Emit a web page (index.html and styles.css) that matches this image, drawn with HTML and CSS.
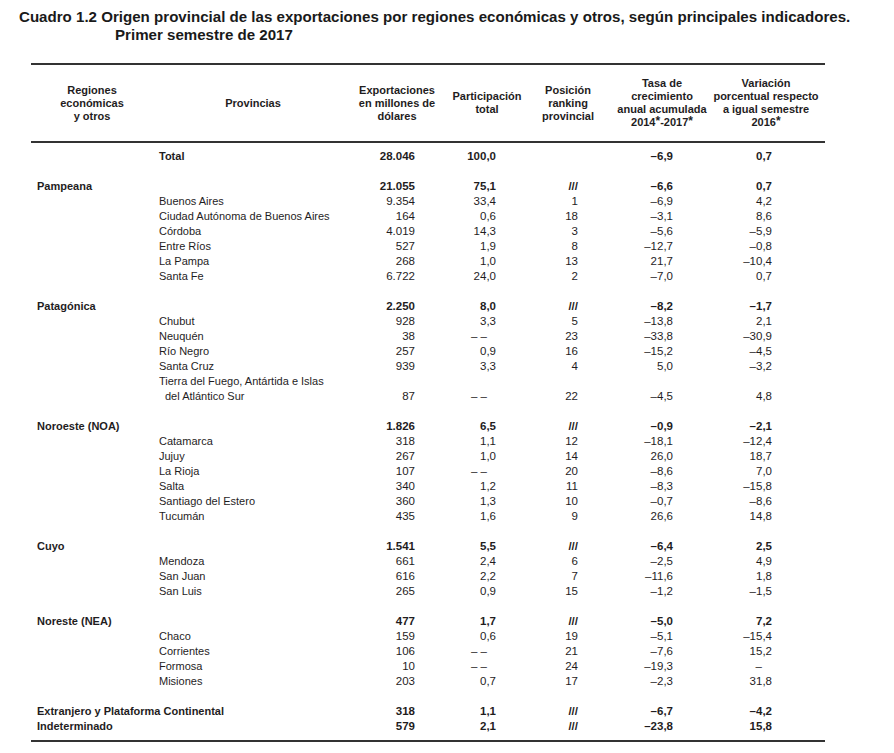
FILE: index.html
```html
<!DOCTYPE html>
<html lang="es">
<head>
<meta charset="utf-8">
<title>Cuadro 1.2</title>
<link rel="stylesheet" href="styles.css">
</head>
<body>
<div class="page">
  <h1 class="title">Cuadro 1.2 Origen provincial de las exportaciones por regiones económicas y otros, según principales indicadores.<br><span class="title-l2">Primer semestre de 2017</span></h1>
  <table class="tbl">
    <colgroup>
      <col class="c-reg"><col class="c-prov"><col class="c-exp"><col class="c-part"><col class="c-pos"><col class="c-tasa"><col class="c-var">
    </colgroup>
    <thead>
      <tr>
        <th>Regiones<br>económicas<br>y otros</th>
        <th>Provincias</th>
        <th>Exportaciones<br>en millones de<br>dólares</th>
        <th>Participación<br>total</th>
        <th>Posición<br>ranking<br>provincial</th>
        <th>Tasa de<br>crecimiento<br>anual acumulada<br>2014<span class="ast">*</span>-2017<span class="ast">*</span></th>
        <th><div class="hv">Variación<br>porcentual respecto<br>a igual semestre<br>2016<span class="ast">*</span></div></th>
      </tr>
    </thead>
    <tbody>
      <tr class="b first"><td></td><td class="prov">Total</td><td class="exp">28.046</td><td class="part">100,0</td><td class="pos"></td><td class="tasa">–6,9</td><td class="var">0,7</td></tr>
      <tr class="sp"><td colspan="7"></td></tr>
      <tr class="b"><td class="reg">Pampeana</td><td></td><td class="exp">21.055</td><td class="part">75,1</td><td class="pos">///</td><td class="tasa">–6,6</td><td class="var">0,7</td></tr>
      <tr><td></td><td class="prov">Buenos Aires</td><td class="exp">9.354</td><td class="part">33,4</td><td class="pos">1</td><td class="tasa">–6,9</td><td class="var">4,2</td></tr>
      <tr><td></td><td class="prov">Ciudad Autónoma de Buenos Aires</td><td class="exp">164</td><td class="part">0,6</td><td class="pos">18</td><td class="tasa">–3,1</td><td class="var">8,6</td></tr>
      <tr><td></td><td class="prov">Córdoba</td><td class="exp">4.019</td><td class="part">14,3</td><td class="pos">3</td><td class="tasa">–5,6</td><td class="var">–5,9</td></tr>
      <tr><td></td><td class="prov">Entre Ríos</td><td class="exp">527</td><td class="part">1,9</td><td class="pos">8</td><td class="tasa">–12,7</td><td class="var">–0,8</td></tr>
      <tr><td></td><td class="prov">La Pampa</td><td class="exp">268</td><td class="part">1,0</td><td class="pos">13</td><td class="tasa">21,7</td><td class="var">–10,4</td></tr>
      <tr><td></td><td class="prov">Santa Fe</td><td class="exp">6.722</td><td class="part">24,0</td><td class="pos">2</td><td class="tasa">–7,0</td><td class="var">0,7</td></tr>
      <tr class="sp"><td colspan="7"></td></tr>
      <tr class="b"><td class="reg">Patagónica</td><td></td><td class="exp">2.250</td><td class="part">8,0</td><td class="pos">///</td><td class="tasa">–8,2</td><td class="var">–1,7</td></tr>
      <tr><td></td><td class="prov">Chubut</td><td class="exp">928</td><td class="part">3,3</td><td class="pos">5</td><td class="tasa">–13,8</td><td class="var">2,1</td></tr>
      <tr><td></td><td class="prov">Neuquén</td><td class="exp">38</td><td class="part nd">– –</td><td class="pos">23</td><td class="tasa">–33,8</td><td class="var">–30,9</td></tr>
      <tr><td></td><td class="prov">Río Negro</td><td class="exp">257</td><td class="part">0,9</td><td class="pos">16</td><td class="tasa">–15,2</td><td class="var">–4,5</td></tr>
      <tr><td></td><td class="prov">Santa Cruz</td><td class="exp">939</td><td class="part">3,3</td><td class="pos">4</td><td class="tasa">5,0</td><td class="var">–3,2</td></tr>
      <tr><td></td><td class="prov">Tierra del Fuego, Antártida e Islas</td><td class="exp"></td><td class="part"></td><td class="pos"></td><td class="tasa"></td><td class="var"></td></tr>
      <tr><td></td><td class="prov cont">del Atlántico Sur</td><td class="exp">87</td><td class="part nd">– –</td><td class="pos">22</td><td class="tasa">–4,5</td><td class="var">4,8</td></tr>
      <tr class="sp"><td colspan="7"></td></tr>
      <tr class="b"><td class="reg">Noroeste (NOA)</td><td></td><td class="exp">1.826</td><td class="part">6,5</td><td class="pos">///</td><td class="tasa">–0,9</td><td class="var">–2,1</td></tr>
      <tr><td></td><td class="prov">Catamarca</td><td class="exp">318</td><td class="part">1,1</td><td class="pos">12</td><td class="tasa">–18,1</td><td class="var">–12,4</td></tr>
      <tr><td></td><td class="prov">Jujuy</td><td class="exp">267</td><td class="part">1,0</td><td class="pos">14</td><td class="tasa">26,0</td><td class="var">18,7</td></tr>
      <tr><td></td><td class="prov">La Rioja</td><td class="exp">107</td><td class="part nd">– –</td><td class="pos">20</td><td class="tasa">–8,6</td><td class="var">7,0</td></tr>
      <tr><td></td><td class="prov">Salta</td><td class="exp">340</td><td class="part">1,2</td><td class="pos">11</td><td class="tasa">–8,3</td><td class="var">–15,8</td></tr>
      <tr><td></td><td class="prov">Santiago del Estero</td><td class="exp">360</td><td class="part">1,3</td><td class="pos">10</td><td class="tasa">–0,7</td><td class="var">–8,6</td></tr>
      <tr><td></td><td class="prov">Tucumán</td><td class="exp">435</td><td class="part">1,6</td><td class="pos">9</td><td class="tasa">26,6</td><td class="var">14,8</td></tr>
      <tr class="sp"><td colspan="7"></td></tr>
      <tr class="b"><td class="reg">Cuyo</td><td></td><td class="exp">1.541</td><td class="part">5,5</td><td class="pos">///</td><td class="tasa">–6,4</td><td class="var">2,5</td></tr>
      <tr><td></td><td class="prov">Mendoza</td><td class="exp">661</td><td class="part">2,4</td><td class="pos">6</td><td class="tasa">–2,5</td><td class="var">4,9</td></tr>
      <tr><td></td><td class="prov">San Juan</td><td class="exp">616</td><td class="part">2,2</td><td class="pos">7</td><td class="tasa">–11,6</td><td class="var">1,8</td></tr>
      <tr><td></td><td class="prov">San Luis</td><td class="exp">265</td><td class="part">0,9</td><td class="pos">15</td><td class="tasa">–1,2</td><td class="var">–1,5</td></tr>
      <tr class="sp"><td colspan="7"></td></tr>
      <tr class="b"><td class="reg">Noreste (NEA)</td><td></td><td class="exp">477</td><td class="part">1,7</td><td class="pos">///</td><td class="tasa">–5,0</td><td class="var">7,2</td></tr>
      <tr><td></td><td class="prov">Chaco</td><td class="exp">159</td><td class="part">0,6</td><td class="pos">19</td><td class="tasa">–5,1</td><td class="var">–15,4</td></tr>
      <tr><td></td><td class="prov">Corrientes</td><td class="exp">106</td><td class="part nd">– –</td><td class="pos">21</td><td class="tasa">–7,6</td><td class="var">15,2</td></tr>
      <tr><td></td><td class="prov">Formosa</td><td class="exp">10</td><td class="part nd">– –</td><td class="pos">24</td><td class="tasa">–19,3</td><td class="var nd1">–</td></tr>
      <tr><td></td><td class="prov">Misiones</td><td class="exp">203</td><td class="part">0,7</td><td class="pos">17</td><td class="tasa">–2,3</td><td class="var">31,8</td></tr>
      <tr class="sp"><td colspan="7"></td></tr>
      <tr class="b"><td class="reg" colspan="2">Extranjero y Plataforma Continental</td><td class="exp">318</td><td class="part">1,1</td><td class="pos">///</td><td class="tasa">–6,7</td><td class="var">–4,2</td></tr>
      <tr class="b last"><td class="reg" colspan="2">Indeterminado</td><td class="exp">579</td><td class="part">2,1</td><td class="pos">///</td><td class="tasa">–23,8</td><td class="var">15,8</td></tr>
    </tbody>
  </table>
</div>
</body>
</html>
```

FILE: styles.css
```css
html, body {
  margin: 0;
  padding: 0;
  background: #ffffff;
}

body {
  font-family: "Liberation Sans Narrow", "Arial Narrow", "Liberation Sans", Arial, sans-serif;
  color: #1f1d1e;
}

.page {
  padding: 8px 0 0 19px;
}

.title {
  margin: 0;
  font-size: 15.1px;
  font-weight: bold;
  line-height: 18px;
  color: #1a1a1a;
}

.title-l2 {
  display: inline-block;
  padding-left: 96px;
}

.tbl {
  margin: 19px 0 0 12px;
  width: 794px;
  table-layout: fixed;
  border-collapse: collapse;
  font-size: 11.5px;
}

.c-reg { width: 122px; }
.c-prov { width: 200px; }
.c-exp { width: 88px; }
.c-part { width: 92px; }
.c-pos { width: 70px; }
.c-tasa { width: 118px; }
.c-var { width: 104px; }

.tbl thead th {
  border-top: 2px solid #333;
  border-bottom: 2px solid #333;
  height: 76px;
  padding: 0;
  text-align: center;
  vertical-align: middle;
  font-weight: bold;
  font-size: 11px;
  line-height: 13px;
  white-space: nowrap;
}

.hv {
  margin: 0 4px 0 -10px;
}

.ast {
  font-size: 12px;
  vertical-align: top;
  line-height: 10px;
}

.tbl tbody td {
  height: 15px;
  padding: 0;
  line-height: 15px;
  white-space: nowrap;
  vertical-align: middle;
}

.tbl tbody tr.first td {
  padding-top: 6px;
}

.tbl tbody tr.last td {
  padding-bottom: 6px;
  border-bottom: 2px solid #333;
}

.tbl tbody tr.sp td {
  height: 15px;
}

.tbl tbody tr.b td {
  font-weight: bold;
}

.reg {
  padding-left: 6px !important;
  text-align: left;
  font-size: 11px;
}

.prov {
  padding-left: 6px !important;
  text-align: left;
  font-size: 11px;
}

.prov.cont {
  padding-left: 12px !important;
}

.exp { text-align: right; padding-right: 26px !important; }
.part { text-align: right; padding-right: 37px !important; }
.pos { text-align: right; padding-right: 25px !important; }
.tasa { text-align: right; padding-right: 48px !important; }
.var { text-align: right; padding-right: 53px !important; }

.part.nd { padding-right: 46px !important; }
.var.nd1 { padding-right: 63px !important; }
```
